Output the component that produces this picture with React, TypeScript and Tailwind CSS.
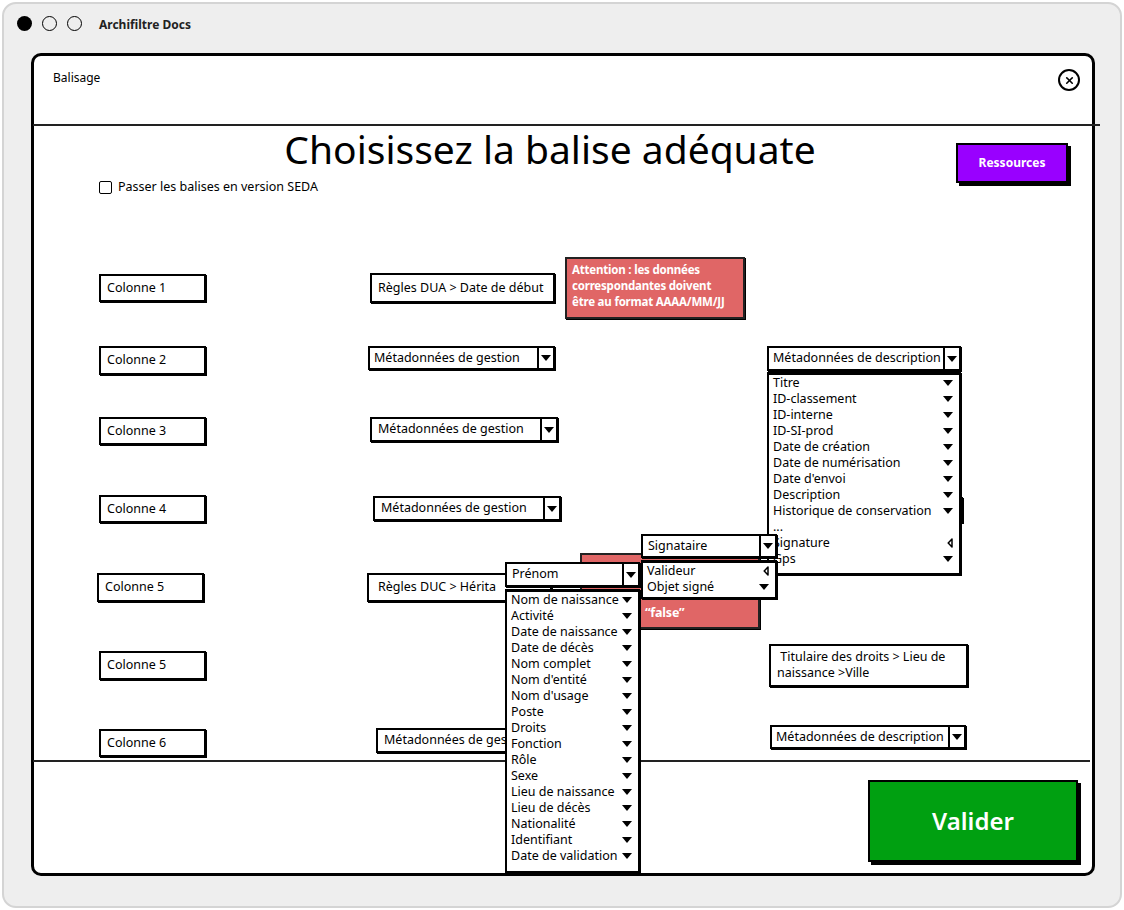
import { X } from "lucide-react";
import type { ReactNode } from "react";

type Arrow = "down" | "left" | null;

interface Item {
  label: string;
  arrow: Arrow;
}

const Down = () => (
  <svg width="10" height="6" viewBox="0 0 10 6">
    <path d="M0 0h10L5 6z" fill="#000" />
  </svg>
);

const Left = () => (
  <svg width="6" height="10" viewBox="0 0 6 10">
    <path d="M5 1L1.2 5 5 9z" fill="none" stroke="#000" strokeWidth="1.5" strokeLinejoin="round" />
  </svg>
);

const Field = ({ className, children }: { className: string; children: ReactNode }) => (
  <div
    className={`flex shrink-0 items-center border-2 border-black bg-white text-[12.5px] shadow-[1px_1px_0_#000] ${className}`}
  >
    {children}
  </div>
);

const Select = ({ label, className }: { label: string; className: string }) => (
  <div className={`flex shrink-0 border-2 border-black bg-white text-[12.5px] shadow-[1px_1px_0_#000] ${className}`}>
    <span className="flex flex-1 items-center overflow-hidden whitespace-nowrap pl-[4px]">{label}</span>
    <span className="flex w-[16px] items-center justify-center border-l-2 border-black">
      <Down />
    </span>
  </div>
);

const List = ({ items, className }: { items: Item[]; className: string }) => (
  <div
    className={`absolute flex flex-col overflow-hidden border-2 border-t-[3px] border-black bg-white text-[12.5px] shadow-[1px_1px_0_#000] ${className}`}
  >
    {items.map((it, i) => (
      <div key={i} className="flex h-[16px] shrink-0 items-center justify-between pl-[4px] pr-[6px] leading-none">
        <span className="whitespace-nowrap">{it.label}</span>
        {it.arrow === "down" && <Down />}
        {it.arrow === "left" && <Left />}
      </div>
    ))}
  </div>
);

const Alert = ({ className, children }: { className: string; children: ReactNode }) => (
  <div
    className={`shrink-0 overflow-hidden whitespace-nowrap border-2 border-[#222] bg-[#e06666] pl-[5px] pt-[3px] text-[11.5px] font-bold leading-[16px] tracking-[-0.2px] text-white shadow-[1px_1px_0_#000] ${className}`}
  >
    {children}
  </div>
);

const descItems: Item[] = [
  { label: "Titre", arrow: "down" },
  { label: "ID-classement", arrow: "down" },
  { label: "ID-interne", arrow: "down" },
  { label: "ID-SI-prod", arrow: "down" },
  { label: "Date de création", arrow: "down" },
  { label: "Date de numérisation", arrow: "down" },
  { label: "Date d'envoi", arrow: "down" },
  { label: "Description", arrow: "down" },
  { label: "Historique de conservation", arrow: "down" },
  { label: "...", arrow: null },
  { label: "Signature", arrow: "left" },
  { label: "Gps", arrow: "down" },
];

const personItems: Item[] = [
  "Nom de naissance",
  "Activité",
  "Date de naissance",
  "Date de décès",
  "Nom complet",
  "Nom d'entité",
  "Nom d'usage",
  "Poste",
  "Droits",
  "Fonction",
  "Rôle",
  "Sexe",
  "Lieu de naissance",
  "Lieu de décès",
  "Nationalité",
  "Identifiant",
  "Date de validation",
].map((label) => ({ label, arrow: "down" as Arrow }));

const signItems: Item[] = [
  { label: "Valideur", arrow: "left" },
  { label: "Objet signé", arrow: "down" },
];

export default function App() {
  return (
    <div className="h-[910px] w-[1124px] bg-white p-[2px] font-['Noto_Sans',sans-serif] text-black">
      <div className="flex h-[906px] flex-col rounded-[14px] border-2 border-[#d4d4d4] bg-[#eeeeee]">
        {/* window bar */}
        <div className="flex h-[38px] shrink-0 items-center pl-[13px]">
          <span className="h-[15px] w-[15px] rounded-full bg-black" />
          <span className="ml-[10px] h-[15px] w-[15px] rounded-full border-[1.5px] border-black" />
          <span className="ml-[10px] h-[15px] w-[15px] rounded-full border-[1.5px] border-black" />
          <span className="ml-[17px] mt-[3px] text-[12px] font-bold text-[#222]">Archifiltre Docs</span>
        </div>

        {/* modal */}
        <div className="relative ml-[27px] mr-[25px] mt-[11px] flex h-[823px] flex-col rounded-[10px] border-[3px] border-black bg-white">
          <div className="flex h-[68px] shrink-0 items-start justify-between pl-[19px] pr-[12px]">
            <span className="mt-[14px] text-[12px] leading-[16px]">Balisage</span>
            <span className="mt-[13px] flex h-[22px] w-[22px] items-center justify-center rounded-full border-2 border-black">
              <X size={11} strokeWidth={3.5} />
            </span>
          </div>
          <div className="-ml-px -mr-[8px] h-[2px] shrink-0 bg-[#222]" />

          {/* body */}
          <div className="flex h-[634px] shrink-0 flex-col">
            <div className="flex">
              <div className="flex flex-col pl-[65px]">
                <div className="ml-[183px] h-[46px] w-[536px] whitespace-nowrap text-center text-[39px] leading-[46px]">
                  Choisissez la balise adéquate
                </div>
                <label className="mt-[6px] flex h-[18px] items-center">
                  <span className="h-[13px] w-[13px] rounded-[2px] border-[1.5px] border-black" />
                  <span className="ml-[6px] text-[12.5px]">Passer les balises en version SEDA</span>
                </label>
              </div>
              <div className="ml-auto mr-[24px] mt-[17px]">
                <button className="h-[40px] w-[112px] border-2 border-black bg-[#9900ff] text-[12px] font-bold text-white shadow-[3px_3px_0_#000]">
                  Ressources
                </button>
              </div>
            </div>

            <div className="mt-[78px] flex flex-col pl-[65px]">
              {/* row 1 */}
              <div className="flex h-[72px]">
                <div className="w-[271px]">
                  <Field className="h-[28px] w-[107px] pl-[6px]">Colonne 1</Field>
                </div>
                <div className="flex w-[397px] items-start">
                  <Field className="-mt-px h-[30px] w-[185px] pl-[6px]">Règles DUA &gt; Date de début</Field>
                  <Alert className="-mt-[17px] ml-[10px] h-[62px] w-[180px]">
                    Attention : les données
                    <br />
                    correspondantes doivent
                    <br />
                    être au format AAAA/MM/JJ
                  </Alert>
                </div>
              </div>

              {/* row 2 */}
              <div className="flex h-[71px]">
                <div className="w-[271px]">
                  <Field className="h-[29px] w-[107px] pl-[6px]">Colonne 2</Field>
                </div>
                <div className="w-[397px]">
                  <Select label="Métadonnées de gestion" className="-ml-[2px] h-[24px] w-[187px]" />
                </div>
                <div>
                  <Select label="Métadonnées de description" className="h-[25px] w-[194px]" />
                </div>
              </div>

              {/* row 3 */}
              <div className="flex h-[78px]">
                <div className="w-[271px]">
                  <Field className="h-[28px] w-[107px] pl-[6px]">Colonne 3</Field>
                </div>
                <div className="w-[397px]">
                  <Select label="Métadonnées de gestion" className="h-[25px] w-[188px] pl-[2px]" />
                </div>
              </div>

              {/* row 4 */}
              <div className="flex h-[78px]">
                <div className="w-[271px]">
                  <Field className="h-[28px] w-[107px] pl-[6px]">Colonne 4</Field>
                </div>
                <div className="w-[397px]">
                  <Select label="Métadonnées de gestion" className="ml-[3px] mt-px h-[25px] w-[188px] pl-[2px]" />
                </div>
                <div>
                  {/* hidden under the open list */}
                  <Select label="" className="mt-[2px] h-[26px] w-[196px]" />
                </div>
              </div>

              {/* row 5 */}
              <div className="flex h-[78px]">
                <div className="w-[271px]">
                  <Field className="-ml-[2px] h-[29px] w-[107px] pl-[6px]">Colonne 5</Field>
                </div>
                <div className="flex w-[397px] items-start">
                  <Field className="-ml-[3px] h-[29px] w-[185px] pl-[9px]">Règles DUC &gt; Hérita</Field>
                  <Alert className="-mt-[20px] ml-[28px] flex h-[76px] w-[180px] items-end pb-[6px] pl-[63px] text-[12.5px]">
                    “false”
                  </Alert>
                </div>
              </div>

              {/* row 6 */}
              <div className="flex h-[78px]">
                <div className="w-[271px]">
                  <Field className="h-[29px] w-[107px] pl-[6px]">Colonne 5</Field>
                </div>
                <div className="w-[397px]" />
                <div>
                  <div className="ml-[2px] -mt-[7px] h-[43px] w-[199px] border-2 border-black bg-white pl-[6px] pt-[3px] text-[12.5px] leading-[16px] shadow-[1px_1px_0_#000]">
                    &nbsp;Titulaire des droits &gt; Lieu de
                    <br />
                    naissance &gt;Ville
                  </div>
                </div>
              </div>

              {/* row 7 */}
              <div className="flex h-[30px]">
                <div className="w-[271px]">
                  <Field className="h-[28px] w-[107px] pl-[6px]">Colonne 6</Field>
                </div>
                <div className="w-[397px]">
                  <Select label="Métadonnées de ges" className="-mt-px ml-[6px] h-[25px] w-[188px] pl-[2px]" />
                </div>
                <div>
                  <Select label="Métadonnées de description" className="-mt-[4px] ml-[3px] h-[24px] w-[196px]" />
                </div>
              </div>
            </div>
          </div>

          <div className="-ml-px mr-[2px] h-[2px] shrink-0 bg-[#222]" />

          {/* footer */}
          <div className="flex flex-1 items-start justify-end pr-[14px] pt-[18px]">
            <button className="h-[82px] w-[210px] border-2 border-black bg-[#00a011] text-[24px] font-semibold text-white shadow-[3px_3px_0_#000]">
              Valider
            </button>
          </div>

          {/* open dropdown lists */}
          <List items={descItems} className="left-[733px] top-[316px] h-[203px] w-[194px]" />
          <div className="absolute left-[471px] top-[506px] bg-white">
            <Select label="Prénom" className="h-[25px] w-[135px] pl-[1px]" />
          </div>
          <List items={personItems} className="left-[471px] top-[533px] h-[284px] w-[135px]" />
          <div className="absolute left-[607px] top-[478px] bg-white">
            <Select label="Signataire" className="h-[24px] w-[136px] pl-[1px]" />
          </div>
          <List items={signItems} className="left-[607px] top-[504px] h-[39px] w-[136px]" />
        </div>
      </div>
    </div>
  );
}
